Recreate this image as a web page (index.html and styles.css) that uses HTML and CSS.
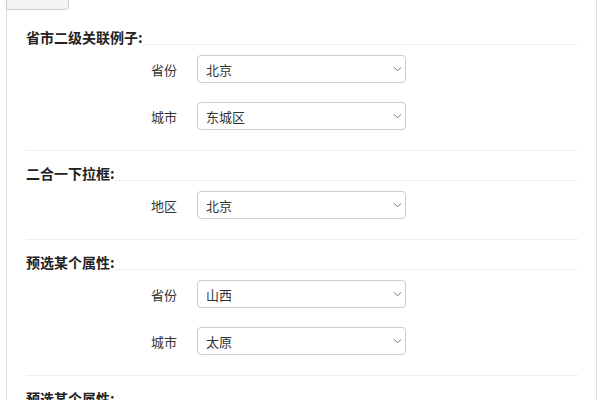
FILE: index.html
```html
<!DOCTYPE html>
<html lang="zh-CN">
<head>
<meta charset="utf-8">
<link rel="stylesheet" href="styles.css">
</head>
<body>
<div class="panel">
  <div class="tab">示例</div>
  <div class="section first">
    <div class="heading"><span>省市二级关联例子:</span><i></i></div>
    <div class="row"><label>省份</label><div class="sel"><select><option>北京</option></select><svg viewBox="0 0 10 6" class="chev"><path d="M1 1l4 4 4-4"/></svg></div></div>
    <div class="row"><label>城市</label><div class="sel"><select><option>东城区</option></select><svg viewBox="0 0 10 6" class="chev"><path d="M1 1l4 4 4-4"/></svg></div></div>
  </div>
  <div class="section">
    <div class="heading"><span>二合一下拉框:</span><i></i></div>
    <div class="row"><label>地区</label><div class="sel"><select><option>北京</option></select><svg viewBox="0 0 10 6" class="chev"><path d="M1 1l4 4 4-4"/></svg></div></div>
  </div>
  <div class="section">
    <div class="heading"><span>预选某个属性:</span><i></i></div>
    <div class="row"><label>省份</label><div class="sel"><select><option>山西</option></select><svg viewBox="0 0 10 6" class="chev"><path d="M1 1l4 4 4-4"/></svg></div></div>
    <div class="row"><label>城市</label><div class="sel"><select><option>太原</option></select><svg viewBox="0 0 10 6" class="chev"><path d="M1 1l4 4 4-4"/></svg></div></div>
  </div>
  <div class="section">
    <div class="heading"><span>预选某个属性:</span><i></i></div>
  </div>
</div>
</body>
</html>
```

FILE: styles.css
```css
html, body {
  margin: 0;
  padding: 0;
  background: #fff;
  overflow: hidden;
  height: 400px;
}
body {
  font-family: "Noto Sans CJK SC", "Liberation Sans", sans-serif;
  font-size: 13px;
  color: #333;
}
.panel {
  margin-left: 6px;
  width: 552px;
  height: 420px;
  border-left: 1px solid #ddd;
  border-right: 1px solid #ddd;
  padding: 0 18px 0 19px;
  box-sizing: content-box;
}
.tab {
  margin-left: -20px;
  margin-top: -20px;
  width: 61px;
  height: 28px;
  line-height: 20px;
  text-align: center;
  background: #f5f5f5;
  border: 1px solid #ccc;
  border-radius: 0 0 4px 0;
  color: #666;
  font-size: 12px;
}
.section {
  border-top: 1px solid #eee;
  padding: 13px 0 20px;
}
.section.first {
  border-top: none;
  padding-top: 18px;
}
.heading {
  display: flex;
  align-items: flex-end;
  height: 17px;
}
.heading span {
  font-weight: bold;
  font-size: 14px;
  line-height: 17px;
  color: #222;
  position: relative;
  top: 1px;
}
.heading i {
  flex: 1;
  border-bottom: 1px solid #eee;
}
.row {
  display: flex;
  align-items: center;
  height: 28px;
  margin-top: 10px;
}
.row + .row {
  margin-top: 19px;
}
.row label {
  width: 151px;
  text-align: right;
  color: #333;
  margin-right: 20px;
}
.sel {
  position: relative;
  width: 209px;
  height: 28px;
}
.sel select {
  appearance: none;
  -webkit-appearance: none;
  display: block;
  width: 100%;
  height: 28px;
  box-sizing: border-box;
  border: 1px solid #ccc;
  border-radius: 4px;
  background: #fff;
  padding: 0 8px;
  font-family: inherit;
  font-size: 13px;
  color: #333;
  margin: 0;
}
.chev {
  position: absolute;
  right: 4px;
  top: 11px;
  width: 9px;
  height: 6px;
  fill: none;
  stroke: #777;
  stroke-width: 1.1;
}
```
